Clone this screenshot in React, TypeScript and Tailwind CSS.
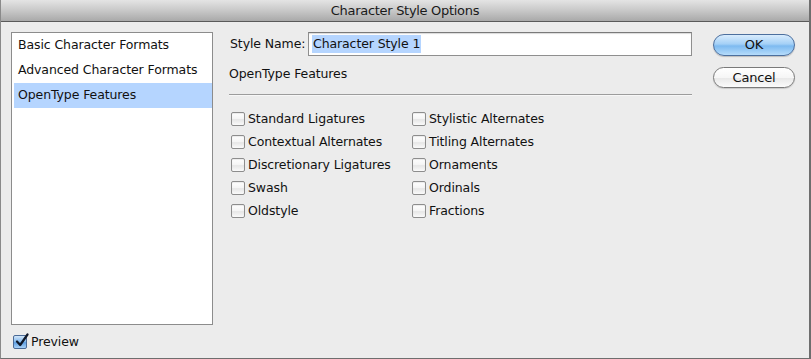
import React from 'react';

const font = "font-['DejaVu_Sans',sans-serif]";

const Checkbox = ({ checked = false }: { checked?: boolean }) => {
  if (checked) {
    return (
      <span className="relative block h-[14px] w-[14px] shrink-0 rounded-[2px] border border-[#4a6a96] bg-[linear-gradient(to_bottom,#d2e6fa,#7fb6ec_50%,#5f9fe2_55%,#a9d2f8)]">
        <svg className="absolute -top-[3px] left-[1px]" width="14" height="15" viewBox="0 0 14 15">
          <path d="M2 8.5 L5.2 12 L12.5 1.5" fill="none" stroke="#101828" strokeWidth="2.2" strokeLinecap="round" strokeLinejoin="round" />
        </svg>
      </span>
    );
  }
  return (
    <span className="block h-[14px] w-[14px] shrink-0 rounded-[2px] border border-[#8d8d8d] bg-[linear-gradient(to_bottom,#ffffff,#f4f4f4_50%,#e6e6e6_55%,#fafafa)] shadow-[inset_0_1px_1px_rgba(0,0,0,0.08)]" />
  );
};

const Option = ({ label }: { label: string }) => (
  <div className="flex h-[23px] items-center gap-[3px]">
    <Checkbox />
    <span className="text-[12.5px] tracking-[-0.1px] text-[#111]">{label}</span>
  </div>
);

const App = () => {
  const categories = ['Basic Character Formats', 'Advanced Character Formats', 'OpenType Features'];
  const left = ['Standard Ligatures', 'Contextual Alternates', 'Discretionary Ligatures', 'Swash', 'Oldstyle'];
  const right = ['Stylistic Alternates', 'Titling Alternates', 'Ornaments', 'Ordinals', 'Fractions'];

  return (
    <div className={`${font} flex h-[359px] w-[811px] flex-col overflow-hidden border-b border-l border-r-2 border-b-[#6e6e6e] border-l-[#8a8a8a] border-r-[#6e6e6e] bg-[#ececec] text-[#111]`}>
      {/* title bar */}
      <div className="flex h-[22px] shrink-0 items-center justify-center border-b border-[#5a5a5a] bg-[linear-gradient(to_bottom,#e4e4e4,#c8c8c8_50%,#a9a9a9)] text-[13px] tracking-[-0.3px] text-[#1a1a1a]">
        Character Style Options
      </div>

      <div className="flex flex-1">
        {/* left column */}
        <div className="ml-[10px] mt-[10px] flex w-[202px] flex-col">
          <div className="h-[293px] border border-[#8c8c8c] bg-white pl-[2px]">
            {categories.map((c, i) => (
              <div
                key={c}
                className={`flex h-[25px] items-center pl-[4px] text-[12.5px] tracking-[-0.1px] ${i === 2 ? 'bg-[#b5d5ff]' : ''}`}
              >
                {c}
              </div>
            ))}
          </div>
          <div className="mt-[8px] flex items-center gap-[4px] pl-[2px]">
            <Checkbox checked />
            <span className="text-[12.5px] tracking-[-0.1px]">Preview</span>
          </div>
        </div>

        {/* middle column */}
        <div className="ml-[16px] mt-[10px] flex w-[463px] flex-col">
          <div className="flex h-[24px] items-center">
            <span className="ml-[1px] w-[78px] text-[12.5px] tracking-[-0.1px]">Style Name:</span>
            <div className="flex h-[24px] flex-1 items-center border border-[#8f8f8f] border-t-[#7a7a7a] bg-white pl-[3px] shadow-[inset_0_1px_1px_rgba(0,0,0,0.15)]">
              <span className="bg-[#b5d5ff] px-[1px] text-[12.5px] leading-[18px] tracking-[-0.1px]">Character Style 1</span>
            </div>
          </div>
          <div className="mt-[9px] text-[12.5px] tracking-[-0.1px]">OpenType Features</div>
          <div className="mt-[10px] h-[2px] border-t border-[#9c9c9c] bg-white/60" />
          <div className="mt-[12px] flex pl-[2px]">
            <div className="flex w-[181px] flex-col">
              {left.map((l) => (
                <Option key={l} label={l} />
              ))}
            </div>
            <div className="flex flex-col">
              {right.map((l) => (
                <Option key={l} label={l} />
              ))}
            </div>
          </div>
        </div>

        {/* buttons */}
        <div className="ml-[21px] mt-[12px] flex w-[82px] flex-col gap-[11px]">
          <button className="flex h-[22px] items-center justify-center rounded-full border border-[#4c6f9e] bg-[linear-gradient(to_bottom,#d9ecfd,#a4d0f6_45%,#7dbaf0_55%,#b6dcfb)] text-[13px] tracking-[-0.2px] text-[#111] shadow-[0_1px_1px_rgba(0,0,0,0.2)]">
            OK
          </button>
          <button className="flex h-[21px] items-center justify-center rounded-full border border-[#7a7a7a] bg-[linear-gradient(to_bottom,#ffffff,#f6f6f6_50%,#e9e9e9_55%,#fbfbfb)] text-[13px] tracking-[-0.2px] text-[#111] shadow-[0_1px_1px_rgba(0,0,0,0.15)]">
            Cancel
          </button>
        </div>
      </div>
    </div>
  );
};

export default App;
